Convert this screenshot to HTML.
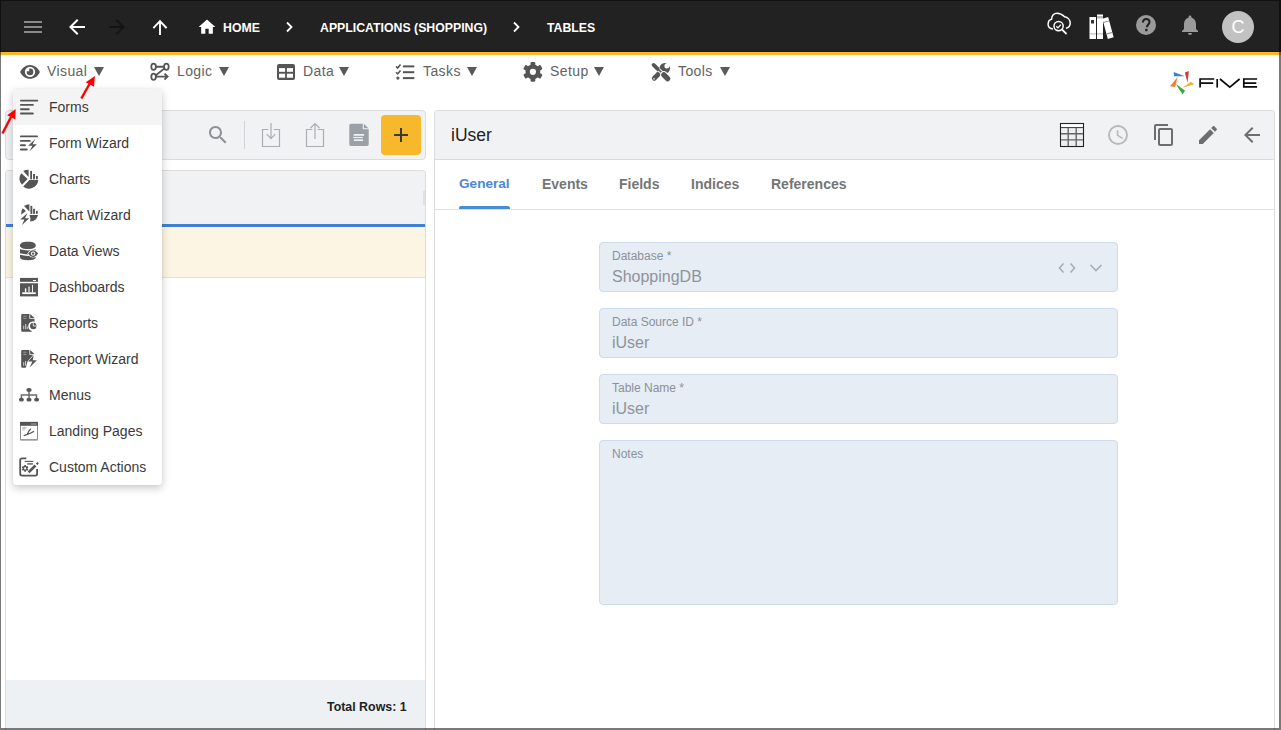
<!DOCTYPE html>
<html><head><meta charset="utf-8">
<style>
*{margin:0;padding:0;box-sizing:border-box}
html,body{width:1281px;height:730px;overflow:hidden;background:#fff;font-family:"Liberation Sans",sans-serif}
.abs{position:absolute}
svg{position:absolute;overflow:visible}
#frame{position:absolute;left:0;top:0;width:1281px;height:730px;border-left:1px solid rgba(0,0,0,.52);border-top:1px solid rgba(0,0,0,.5);border-right:2px solid rgba(0,0,0,.52);border-bottom:2px solid rgba(0,0,0,.52);z-index:50;pointer-events:none}
#hdr{position:absolute;left:0;top:0;width:1281px;height:52px;background:#222}
#hdrline{position:absolute;left:0;top:51px;width:1281px;height:1px;background:#151a24}
#yel{position:absolute;left:0;top:52px;width:1281px;height:3px;background:#f9b82c}
.crumb{position:absolute;color:#fff;font-weight:bold;font-size:12.3px;top:21px;line-height:15px;white-space:nowrap}
.tb{position:absolute;top:63px;font-size:14px;letter-spacing:0.4px;color:#626262;line-height:16px;white-space:nowrap}
.tri{position:absolute;top:67px;width:0;height:0;border-left:5px solid transparent;border-right:5px solid transparent;border-top:9px solid #5a5a5a}
.card{position:absolute;border:1px solid #dcdcdc;border-radius:4px;background:#f1f2f4}
.menu{position:absolute;left:13px;top:89px;width:149px;height:396px;background:#fff;border-radius:3px;box-shadow:0 3px 8px rgba(0,0,0,.22),0 0 2px rgba(0,0,0,.06);z-index:20}
.mi{position:absolute;left:0;width:149px;height:36px}
.mi span{position:absolute;left:36px;top:10px;font-size:14px;line-height:16px;color:#3a3a3a;white-space:nowrap}
.mi svg{left:1px;top:5px}
.tab{position:absolute;top:176px;font-size:14px;font-weight:bold;color:#757575;line-height:16px;white-space:nowrap}
.fld{position:absolute;left:599px;width:519px;height:50px;background:#e6edf5;border:1px solid #cddbea;border-radius:4px}
.fld .lb{position:absolute;left:12px;top:6px;font-size:12px;line-height:14px;color:#8b9198;white-space:nowrap}
.fld .vl{position:absolute;left:12px;top:25px;font-size:16px;line-height:18px;color:#8f9399;white-space:nowrap}
</style></head><body>

<!-- HEADER -->
<div id="hdr"></div>
<div id="hdrline"></div>
<div id="yel"></div>

<!-- hamburger -->
<div class="abs" style="left:24px;top:21px;width:18px;height:2px;background:#8a8a8a"></div>
<div class="abs" style="left:24px;top:26px;width:18px;height:2px;background:#8a8a8a"></div>
<div class="abs" style="left:24px;top:31px;width:18px;height:2px;background:#8a8a8a"></div>

<!-- back arrow -->
<svg style="left:65px;top:15px" width="24" height="24" viewBox="0 0 24 24"><path fill="#fff" d="M20 11H7.83l5.59-5.59L12 4l-8 8 8 8 1.41-1.41L7.83 13H20v-2z"/></svg>
<!-- forward arrow -->
<svg style="left:105px;top:15px" width="24" height="24" viewBox="0 0 24 24"><path fill="#141414" d="M12 4l-1.41 1.41L16.17 11H4v2h12.17l-5.58 5.59L12 20l8-8z"/></svg>
<!-- up arrow -->
<svg style="left:0;top:0" width="1" height="1"><path d="M154 27.5L160 21.2L166 27.5M160 21.5V34" stroke="#fff" stroke-width="1.9" fill="none" stroke-linecap="square"/></svg>
<!-- home -->
<svg style="left:197px;top:17px" width="20" height="20" viewBox="0 0 24 24"><path fill="#fff" d="M10 20v-6h4v6h5v-8h3L12 3 2 12h3v8z"/></svg>
<div class="crumb" style="left:223px">HOME</div>
<svg style="left:0;top:0" width="1" height="1"><path d="M287 22.5L291.5 27L287 31.5" stroke="#fff" stroke-width="1.8" fill="none"/></svg>
<div class="crumb" style="left:320px">APPLICATIONS (SHOPPING)</div>
<svg style="left:0;top:0" width="1" height="1"><path d="M514 22.5L518.5 27L514 31.5" stroke="#fff" stroke-width="1.8" fill="none"/></svg>
<div class="crumb" style="left:547px">TABLES</div>

<!-- right header icons -->
<svg style="left:1040px;top:5px" width="40" height="40" viewBox="0 0 40 40">
  <path d="M13 23.9C9.6 23.6 8 21.5 8.1 19.2C8.2 16.6 9.8 14.7 11.5 14.3C11.9 10.6 14.1 8.3 17.1 8.3C20.1 8.3 22.6 9.9 24.6 11.8C27.8 12.3 30.2 14.9 30.2 18.2C30.2 20.8 28.4 22.7 25.9 23.2" stroke="#fff" stroke-width="1.5" fill="none"/>
  <circle cx="18.6" cy="21.1" r="4.6" stroke="#fff" stroke-width="1.5" fill="#222"/>
  <path d="M16.3 21.3L17.9 22.9L20.9 19.6" stroke="#fff" stroke-width="1.3" fill="none"/>
  <path d="M21.9 24.4L26 28.5" stroke="#fff" stroke-width="1.8" stroke-linecap="round"/>
</svg>
<svg style="left:1089px;top:14px" width="26" height="26" viewBox="0 0 26 26">
  <rect x="0.5" y="3" width="6.5" height="22" fill="#fff"/>
  <rect x="2" y="6" width="3" height="3.5" fill="#333"/>
  <rect x="0.5" y="19.5" width="6.5" height="0.9" fill="#aaa"/>
  <rect x="8" y="0.5" width="6" height="24.5" fill="#fff"/>
  <rect x="8" y="2" width="6" height="2.5" fill="#bbb"/>
  <rect x="8" y="19.5" width="6" height="0.9" fill="#aaa"/>
  <g transform="rotate(-15 19 14)"><rect x="16" y="3.5" width="6" height="21" fill="#fff"/><rect x="16" y="7" width="6" height="0.9" fill="#888"/><rect x="16" y="19" width="6" height="0.9" fill="#888"/></g>
</svg>
<svg style="left:1136px;top:15px" width="20" height="20" viewBox="0 0 20 20">
  <circle cx="10" cy="10" r="10" fill="#9a9a9a"/>
  <path d="M6.9 7.6C6.9 5.4 8.3 4 10.2 4C12.1 4 13.5 5.3 13.5 7C13.5 9.3 10.9 9.6 10.9 12.3" stroke="#222" stroke-width="2.1" fill="none"/>
  <rect x="9.2" y="13.8" width="2.3" height="2.4" fill="#222"/>
</svg>
<svg style="left:1178px;top:13px" width="24" height="24" viewBox="0 0 24 24"><path fill="#9a9a9a" d="M12 22c1.1 0 2-.9 2-2h-4c0 1.1.89 2 2 2zm6-6v-5c0-3.07-1.64-5.64-4.5-6.32V4c0-.83-.67-1.5-1.5-1.5s-1.5.67-1.5 1.5v.68C7.63 5.36 6 7.92 6 11v5l-2 2v1h16v-1l-2-2z"/></svg>
<div class="abs" style="left:1222px;top:11px;width:32px;height:32px;border-radius:50%;background:#c2c2c2;color:#fff;font-size:18px;line-height:32px;text-align:center">C</div>

<!-- TOOLBAR -->
<svg style="left:14px;top:56px" width="32" height="32" viewBox="0 0 32 32">
  <path d="M6.1 15.9C8 12 11.7 9 16 9S24 12 25.9 15.9C24 19.8 20.3 22.8 16 22.8S8 19.8 6.1 15.9Z" fill="#555"/>
  <circle cx="16" cy="15.9" r="5.15" fill="#fff"/><circle cx="16" cy="15.9" r="3.3" fill="#555"/>
  <path d="M15.2 15.2H12.6A2.6 2.6 0 0 1 15.2 12.6Z" fill="#fff"/>
</svg>
<div class="tb" style="left:47px">Visual</div>
<div class="tri" style="left:94px"></div>

<svg style="left:145px;top:56px" width="32" height="32" viewBox="0 0 32 32">
  <g stroke="#555" stroke-width="1.8" fill="none">
  <ellipse cx="8.6" cy="10.8" rx="2.3" ry="3.1"/>
  <ellipse cx="21.4" cy="10.8" rx="2.3" ry="3.1"/>
  <ellipse cx="8.6" cy="20.8" rx="2.3" ry="3.1"/>
  <path d="M10.9 10.75H19.1M19.2 12.6L10.9 19.2M10.9 20.6H22.6M19.5 17.6L22.6 20.6L19.5 23.7"/>
  </g>
</svg>
<div class="tb" style="left:177px">Logic</div>
<div class="tri" style="left:219px"></div>

<svg style="left:270px;top:56px" width="32" height="32" viewBox="0 0 32 32">
  <rect x="7" y="7.9" width="18" height="16" rx="2" fill="#555"/>
  <rect x="9" y="12.1" width="6.1" height="3.7" fill="#fff"/><rect x="16.9" y="12.1" width="6.1" height="3.7" fill="#fff"/>
  <rect x="9" y="17.7" width="6.1" height="4" fill="#fff"/><rect x="16.9" y="17.7" width="6.1" height="4" fill="#fff"/>
</svg>
<div class="tb" style="left:303px">Data</div>
<div class="tri" style="left:339px"></div>

<svg style="left:390px;top:56px" width="32" height="32" viewBox="0 0 32 32">
  <path d="M6.1 10.4L7.7 12L10.5 8.6M6.1 16.3L7.7 17.9L10.5 14.5" stroke="#555" stroke-width="1.6" fill="none"/>
  <circle cx="7.9" cy="22.1" r="1.6" fill="#555"/>
  <rect x="12.9" y="9.4" width="11.4" height="2" fill="#555"/><rect x="12.9" y="15.2" width="11.4" height="2" fill="#555"/><rect x="12.9" y="21.1" width="11.4" height="2" fill="#555"/>
</svg>
<div class="tb" style="left:423px">Tasks</div>
<div class="tri" style="left:467px"></div>

<svg style="left:516px;top:56px" width="32" height="32" viewBox="0 0 32 32">
  <g fill="#555" transform="translate(16.9 15.8)">
    <circle r="7.4"/>
    <rect x="-2.4" y="-9.9" width="4.8" height="5" rx="1.1"/>
    <rect x="-2.4" y="-9.9" width="4.8" height="5" rx="1.1" transform="rotate(60)"/>
    <rect x="-2.4" y="-9.9" width="4.8" height="5" rx="1.1" transform="rotate(120)"/>
    <rect x="-2.4" y="-9.9" width="4.8" height="5" rx="1.1" transform="rotate(180)"/>
    <rect x="-2.4" y="-9.9" width="4.8" height="5" rx="1.1" transform="rotate(240)"/>
    <rect x="-2.4" y="-9.9" width="4.8" height="5" rx="1.1" transform="rotate(300)"/>
    <circle r="3.1" fill="#fff"/>
  </g>
</svg>
<div class="tb" style="left:550px">Setup</div>
<div class="tri" style="left:594px"></div>

<svg style="left:645px;top:56px" width="32" height="32" viewBox="0 0 32 32">
  <circle cx="19.8" cy="12.2" r="5.3" fill="#555"/>
  <path d="M9.3 22.2L17 14.5" stroke="#555" stroke-width="4.8" stroke-linecap="round"/>
  <circle cx="21.9" cy="10" r="2.5" fill="#fff"/>
  <path d="M23.4 11.5L20.4 8.5L24.2 4.7L27.2 7.7Z" fill="#fff"/>
  <rect x="8.3" y="22" width="1.6" height="1.6" fill="#ccc"/>
  <path d="M12.5 12.5L18.5 18.5" stroke="#fff" stroke-width="3.6"/>
  <path d="M12 12L18 18" stroke="#555" stroke-width="1.7"/>
  <path d="M8.6 8.9L12.6 12.9" stroke="#555" stroke-width="3.8" stroke-linecap="round"/>
  <path d="M18.9 18.9L22.6 22.6" stroke="#fff" stroke-width="7.2" stroke-linecap="round"/>
  <path d="M18.9 18.9L22.6 22.6" stroke="#555" stroke-width="5.4" stroke-linecap="round"/>
</svg>
<div class="tb" style="left:678px">Tools</div>
<div class="tri" style="left:720px"></div>

<!-- FIVE logo -->
<svg style="left:0;top:0" width="1" height="1">
  <path d="M1173.7 71.9L1174 76.3L1184.8 76.3Z" fill="#3b7dd8"/>
  <path d="M1184.9 72.6L1188.9 70.9L1187.4 82.8Z" fill="#e0342f"/>
  <path d="M1182.4 87.8L1190.8 81.8L1194.4 84.2Z" fill="#f5b52a"/>
  <path d="M1175.8 84.1L1185 90.4L1182.6 94.4Z" fill="#3fa54a"/>
  <path d="M1177.6 77.1L1170 86.2L1175.2 86.9Z" fill="#f57f2a"/>
  <g stroke="#0a0a0a" stroke-width="1.7" fill="none">
    <path d="M1214.2 79H1200.1V87.6M1201 83.2H1213.2"/>
    <path d="M1217.2 79V87.6"/>
    <path d="M1220 79L1229.8 87.2L1239.6 79"/>
    <path d="M1257.1 79H1243.8V86.9H1257.1M1244.5 83.2H1256.3"/>
  </g>
</svg>

<!-- LEFT PANEL -->
<div class="card" style="left:5px;top:110px;width:421px;height:50px"></div>
<!-- search -->
<svg style="left:206px;top:123px" width="24" height="24" viewBox="0 0 24 24"><path fill="#8d9297" d="M15.5 14h-.79l-.28-.27C15.41 12.59 16 11.11 16 9.5 16 5.91 13.09 3 9.5 3S3 5.91 3 9.5 5.91 16 9.5 16c1.61 0 3.09-.59 4.23-1.57l.27.28v.79l5 4.99L20.49 19l-4.99-5zm-6 0C7.01 14 5 11.99 5 9.5S7.01 5 9.5 5 14 7.01 14 9.5 11.99 14 9.5 14z"/></svg>
<div class="abs" style="left:244px;top:121px;width:1px;height:28px;background:#cfd2d6"></div>
<!-- download -->
<svg style="left:0;top:0" width="1" height="1" >
  <g stroke="#a9aeb3" stroke-width="1.2" fill="none">
    <path d="M268.2 129.5H262.5V146.5H279.5V129.5H273.8"/>
    <path d="M271 123V139M266.7 134.2L271 138.6L275.3 134.2"/>
  </g>
  <g stroke="#a9aeb3" stroke-width="1.2" fill="none">
    <path d="M312.2 129.5H306.5V146.5H323.5V129.5H317.8"/>
    <path d="M315 124V139M310.5 128L315 123.5L319.5 128"/>
  </g>
</svg>
<!-- doc -->
<svg style="left:349px;top:124px" width="20" height="23" viewBox="0 0 20 23">
  <path d="M1.8 -0.3H14.8L19.7 4.8V20.2A1.7 1.7 0 0 1 18 21.9H2A1.7 1.7 0 0 1 0.3 20.2V1.4A1.7 1.7 0 0 1 2 -0.3Z" fill="#9aa0a6"/>
  <path d="M14.3 -0.5V4.8H20" stroke="#f1f2f4" stroke-width="1.1" fill="none"/>
  <path d="M15.1 0.6L18.8 4.1H15.1Z" fill="#9aa0a6"/>
  <rect x="4.7" y="10" width="10.4" height="1.8" fill="#eef0f2"/>
  <rect x="4.2" y="12.9" width="9.5" height="1.2" fill="#eef0f2"/>
  <rect x="4.9" y="15.3" width="9.2" height="1.7" fill="#eef0f2"/>
</svg>
<!-- add button -->
<div class="abs" style="left:381px;top:115px;width:40px;height:40px;background:#f7b92b;border-radius:4px"></div>
<div class="abs" style="left:394px;top:134px;width:14px;height:2px;background:#3a3a3a"></div>
<div class="abs" style="left:400px;top:128px;width:2px;height:14px;background:#3a3a3a"></div>

<!-- list card -->
<div class="abs" style="left:5px;top:170px;width:421px;height:560px;border:1px solid #dcdcdc;border-radius:4px 4px 0 0;border-bottom:none;background:#fff"></div>
<div class="abs" style="left:6px;top:171px;width:419px;height:53px;background:#f1f2f4;border-radius:3px 3px 0 0"></div>
<div class="abs" style="left:423px;top:191px;width:2px;height:14px;background:#dfe1e4"></div>
<div class="abs" style="left:6px;top:224px;width:419px;height:3px;background:#3f80d4"></div>
<div class="abs" style="left:6px;top:227px;width:419px;height:51px;background:#fdf5e4;border-bottom:1px solid #e6e1d6"></div>
<!-- footer -->
<div class="abs" style="left:6px;top:680px;width:419px;height:48px;background:#eef1f3"></div>
<div class="abs" style="left:327px;top:700px;font-size:12.4px;font-weight:bold;color:#222;line-height:15px;white-space:nowrap">Total Rows: 1</div>

<!-- RIGHT PANEL -->
<div class="abs" style="left:434px;top:110px;width:841px;height:620px;border:1px solid #dcdcdc;border-bottom:none;border-radius:4px 4px 0 0;background:#fff"></div>
<div class="abs" style="left:435px;top:111px;width:839px;height:49px;background:#f1f2f4;border-bottom:1px solid #dcdcdc;border-radius:3px 3px 0 0"></div>
<div class="abs" style="left:451px;top:125px;font-size:17.5px;color:#222;line-height:20px;white-space:nowrap">iUser</div>
<!-- table icon -->
<svg style="left:1060px;top:123px" width="24" height="24" viewBox="0 0 24 24">
  <rect x="0" y="0" width="24" height="24" fill="#fff"/>
  <rect x="1" y="5" width="22" height="18" fill="#eeeff1"/>
  <rect x="0.5" y="0.5" width="23" height="23" fill="none" stroke="#222" stroke-width="1.1"/>
  <path d="M1 4.6H23" stroke="#333" stroke-width="1"/>
  <path d="M1 10.8H23M1 16.9H23M8.2 5V23M16.2 5V23" stroke="#666" stroke-width="1.4"/>
</svg>
<!-- clock -->
<svg style="left:1108px;top:125px" width="20" height="20" viewBox="0 0 20 20">
  <circle cx="10" cy="10" r="9" stroke="#b8b8b8" stroke-width="1.9" fill="none"/>
  <path d="M9.6 5.2V10.4L14.6 13.4" stroke="#b8b8b8" stroke-width="1.6" fill="none"/>
</svg>
<svg style="left:1152px;top:123px" width="24" height="24" viewBox="0 0 24 24"><path fill="#6e6e6e" d="M16 1H4c-1.1 0-2 .9-2 2v14h2V3h12V1zm3 4H8c-1.1 0-2 .9-2 2v14c0 1.1.9 2 2 2h11c1.1 0 2-.9 2-2V7c0-1.1-.9-2-2-2zm0 16H8V7h11v14z"/></svg>
<svg style="left:1196px;top:123px" width="24" height="24" viewBox="0 0 24 24"><path fill="#6e6e6e" d="M3 17.25V21h3.75L17.81 9.94l-3.75-3.75L3 17.25zM20.71 7.04c.39-.39.39-1.02 0-1.41l-2.34-2.34c-.39-.39-1.02-.39-1.41 0l-1.83 1.83 3.75 3.75 1.83-1.83z"/></svg>
<svg style="left:1240px;top:123px" width="24" height="24" viewBox="0 0 24 24"><path fill="#6e6e6e" d="M20 11H7.83l5.59-5.59L12 4l-8 8 8 8 1.41-1.41L7.83 13H20v-2z"/></svg>

<!-- tabs -->
<div class="tab" style="left:459px;color:#4a88d8;font-size:13.6px">General</div>
<div class="abs" style="left:459px;top:206px;width:51px;height:3px;background:#4a88d8;border-radius:2px 2px 0 0"></div>
<div class="tab" style="left:542px">Events</div>
<div class="tab" style="left:619px">Fields</div>
<div class="tab" style="left:691px">Indices</div>
<div class="tab" style="left:771px">References</div>
<div class="abs" style="left:435px;top:209px;width:839px;height:1px;background:#e0e0e0"></div>

<!-- fields -->
<div class="fld" style="top:242px"><div class="lb">Database *</div><div class="vl">ShoppingDB</div></div>
<svg style="left:0;top:0" width="1" height="1">
  <path d="M1063.5 263.5L1059.5 268L1063.5 272.5M1070.5 263.5L1074.5 268L1070.5 272.5" stroke="#a9adb3" stroke-width="1.6" fill="none"/>
  <path d="M1090.5 265L1096 270.5L1101.5 265" stroke="#a9adb3" stroke-width="1.6" fill="none"/>
</svg>
<div class="fld" style="top:308px"><div class="lb">Data Source ID *</div><div class="vl">iUser</div></div>
<div class="fld" style="top:374px"><div class="lb">Table Name *</div><div class="vl">iUser</div></div>
<div class="fld" style="top:440px;height:165px"><div class="lb">Notes</div></div>

<!-- DROPDOWN MENU -->
<div class="menu">
  <div class="mi" style="top:0;background:#f4f4f4;border-radius:3px 3px 0 0"><svg width="30" height="30" viewBox="0 0 30 30"><path d="M6.9 6.58H23.3M6.9 10.9H18.9M6.9 15.2H14.8M6.9 19.5H18.9" stroke="#555" stroke-width="1.85" stroke-linecap="round"/></svg><span>Forms</span></div>
  <div class="mi" style="top:36px"><svg width="30" height="30" viewBox="0 0 30 30"><path d="M6.9 6.4H23.1M6.9 10.9H15.8M6.9 15.2H11M6.9 19.5H12.8" stroke="#555" stroke-width="1.85" stroke-linecap="round"/><path d="M21.3 8.9L14.1 15.8H18.4L15.6 21.2L22.9 14.2H18.6Z" fill="#555" stroke="#fff" stroke-width="1" paint-order="stroke"/></svg><span>Form Wizard</span></div>
  <div class="mi" style="top:72px"><svg width="30" height="30" viewBox="0 0 30 30"><g fill="#555"><path d="M7.4 7.2L13.6 13L8 18.7A8.4 8.4 0 0 1 7.4 7.2Z"/><path d="M9.2 5.1A9.6 9.6 0 0 1 14.6 3.7V10.9Z"/><path d="M15.4 14H24.2A9.2 9.2 0 0 1 9.2 20.5Z"/><rect x="16.2" y="4.9" width="1.8" height="8.4"/><rect x="19.1" y="8" width="1.9" height="5.3"/><rect x="22" y="10" width="1.8" height="3.3"/></g></svg><span>Charts</span></div>
  <div class="mi" style="top:108px"><svg width="30" height="30" viewBox="0 0 30 30"><g fill="#555"><path d="M10 4.1A9.6 9.6 0 0 1 15.4 2.3V9.5Z"/><path d="M8.8 6.2L11.9 8.9L7.2 12.8A8.4 8.4 0 0 1 8.8 6.2Z"/><rect x="16.4" y="3.9" width="1.9" height="8"/><rect x="19.1" y="6.8" width="1.9" height="5.1"/><rect x="22" y="8.8" width="1.7" height="3.1"/><path d="M15.4 13H24.1A8.8 8.8 0 0 1 16.2 19.5L16.4 16.2Z"/><path d="M13.6 11L6.2 17.4H10.4L8 22.9L15.2 16.3H11Z" stroke="#fff" stroke-width="1" paint-order="stroke"/></g></svg><span>Chart Wizard</span></div>
  <div class="mi" style="top:144px"><svg width="30" height="30" viewBox="0 0 30 30"><g fill="#555"><rect x="6" y="3.7" width="15.8" height="7.3" rx="6" ry="3.6"/><path d="M6 11.3Q13.9 13.6 21.8 11.3V15.3Q13.9 17.6 6 15.3Z"/><path d="M6 16.8Q13.9 19.1 21.8 16.8V19.2Q21.8 22.2 13.9 22.2Q6 22.2 6 19.2Z"/><path d="M14.2 15.6C15.4 13.6 17.1 12.3 19.1 12.3S22.8 13.6 24 15.6C22.8 17.6 21.1 18.9 19.1 18.9S15.4 17.6 14.2 15.6Z" stroke="#fff" stroke-width="1.4" paint-order="stroke"/><circle cx="19.1" cy="15.6" r="2.2" fill="#fff"/><circle cx="19.1" cy="15.6" r="1.2"/></g></svg><span>Data Views</span></div>
  <div class="mi" style="top:180px"><svg width="30" height="30" viewBox="0 0 30 30"><g fill="#555"><rect x="6" y="3.9" width="18" height="3.9"/><rect x="6" y="9.25" width="18" height="13.15"/></g><rect x="18.9" y="6" width="3.1" height="1" fill="#fff"/><rect x="8.2" y="18.3" width="13.6" height="1.8" fill="#fff"/><rect x="10.9" y="14.4" width="1.4" height="4" fill="#fff"/><rect x="14.2" y="12.5" width="1.6" height="6" fill="#ccc"/><rect x="18.1" y="10.9" width="0.9" height="7.5" fill="#fff"/></svg><span>Dashboards</span></div>
  <div class="mi" style="top:216px"><svg width="30" height="30" viewBox="0 0 30 30"><g fill="#555"><path d="M8.2 3.9H15.4V8.8H20.5V11.9A4.4 4.4 0 0 0 17.4 20.8L18 21.8H8.2A1 1 0 0 1 7.2 20.8V4.9A1 1 0 0 1 8.2 3.9Z"/><path d="M16.2 3.9L20.5 8H16.2Z"/><circle cx="19.3" cy="16" r="3.6"/></g><rect x="9.2" y="5.7" width="3.3" height="1" fill="#999"/><rect x="9.2" y="7.9" width="3.3" height="1" fill="#999"/><rect x="9.3" y="15.6" width="0.9" height="3.6" fill="#ddd"/><rect x="11.3" y="14" width="0.9" height="5.2" fill="#ddd"/><rect x="12.8" y="16.6" width="0.9" height="2.6" fill="#ddd"/><circle cx="19.3" cy="16" r="3.9" fill="none" stroke="#fff" stroke-width="0.9"/><path d="M19.3 12.6V16H22.7" stroke="#fff" stroke-width="0.8" fill="none"/></svg><span>Reports</span></div>
  <div class="mi" style="top:252px"><svg width="30" height="30" viewBox="0 0 30 30"><g fill="#555"><path d="M8.2 3.9H15.4V8.8H20.5L13.2 16.4L11.8 21.8H8.2A1 1 0 0 1 7.2 20.8V4.9A1 1 0 0 1 8.2 3.9Z"/><path d="M16.2 3.9L20.5 8H16.2Z"/></g><rect x="9.2" y="5.7" width="3.3" height="1" fill="#999"/><rect x="9.2" y="7.9" width="3.3" height="1" fill="#999"/><rect x="9.3" y="16.2" width="0.9" height="3.5" fill="#ddd"/><rect x="11.2" y="15" width="0.9" height="4.7" fill="#ddd"/><path d="M19.6 9.2L14.2 15.6H18.4L15.6 21.4L22.9 14.2H18.8Z" fill="#555" stroke="#fff" stroke-width="1.1" paint-order="stroke"/></svg><span>Report Wizard</span></div>
  <div class="mi" style="top:288px"><svg width="30" height="30" viewBox="0 0 30 30"><path d="M7.4 17V12.95H22.5V17M15 9.5V17" stroke="#6c6c6c" stroke-width="1.5" fill="none"/><g fill="#555"><ellipse cx="15" cy="8" rx="2.7" ry="1.9"/><ellipse cx="7.4" cy="17.7" rx="2.5" ry="1.9"/><ellipse cx="15" cy="17.7" rx="2.6" ry="1.9"/><ellipse cx="22.6" cy="17.7" rx="2.5" ry="1.9"/></g></svg><span>Menus</span></div>
  <div class="mi" style="top:324px"><svg width="30" height="30" viewBox="0 0 30 30"><rect x="6.5" y="4.4" width="17" height="17.5" rx="0.8" fill="#fff" stroke="#8a8a8a" stroke-width="1"/><rect x="6" y="21" width="18" height="1.4" fill="#9a9a9a"/><rect x="6" y="3.9" width="18" height="3.9" fill="#555"/><rect x="16.9" y="5.3" width="5.7" height="1.5" fill="#8c8c8c"/><rect x="8.2" y="8.8" width="4.5" height="0.9" fill="#bbb"/><rect x="8.2" y="10.2" width="4.1" height="0.9" fill="#bbb"/><rect x="8.2" y="11.6" width="2.7" height="0.9" fill="#bbb"/><path d="M10.2 17.5C13.5 16.5 17 15.6 19.6 13.6M13.6 15.9C14.2 14 15.2 12.4 16.4 11.1" stroke="#555" stroke-width="1.3" fill="none" stroke-linecap="round"/></svg><span>Landing Pages</span></div>
  <div class="mi" style="top:360px"><svg width="30" height="30" viewBox="0 0 30 30"><path d="M12.3 4.3H8A1.8 1.8 0 0 0 6.2 6.1V19.8A1.8 1.8 0 0 0 8 21.6H21.3A1.8 1.8 0 0 0 23.1 19.8V15" stroke="#555" stroke-width="1.8" fill="none"/><path d="M10.7 7.4H19.3" stroke="#555" stroke-width="1.1"/><path d="M13.2 9.9H18.9" stroke="#777" stroke-width="1.7"/><g transform="translate(11.1 14.4)" fill="#555"><circle r="2.3"/><rect x="-0.9" y="-3.3" width="1.8" height="6.6"/><rect x="-0.9" y="-3.3" width="1.8" height="6.6" transform="rotate(60)"/><rect x="-0.9" y="-3.3" width="1.8" height="6.6" transform="rotate(120)"/><circle r="1.1" fill="#fff"/></g><path d="M14.6 18.4L21.4 11.5" stroke="#555" stroke-width="2.6"/><path d="M23.4 8.1L24.9 9.6L23.4 11.1L21.9 9.6Z" fill="#555"/></svg><span>Custom Actions</span></div>
</div>

<!-- red annotation arrows -->
<svg style="left:0;top:0;z-index:30" width="1" height="1">
  <path d="M81.3 98.5L89.5 84" stroke="#f00" stroke-width="2.4"/>
  <path d="M94.9 76L85.8 82.2L94 86.8Z" fill="#f00"/>
  <path d="M2.4 133.5L11 117" stroke="#f00" stroke-width="2.4"/>
  <path d="M15.6 109.1L7.2 115.3L15.3 119.6Z" fill="#f00"/>
</svg>

<div id="frame"></div>
</body></html>
